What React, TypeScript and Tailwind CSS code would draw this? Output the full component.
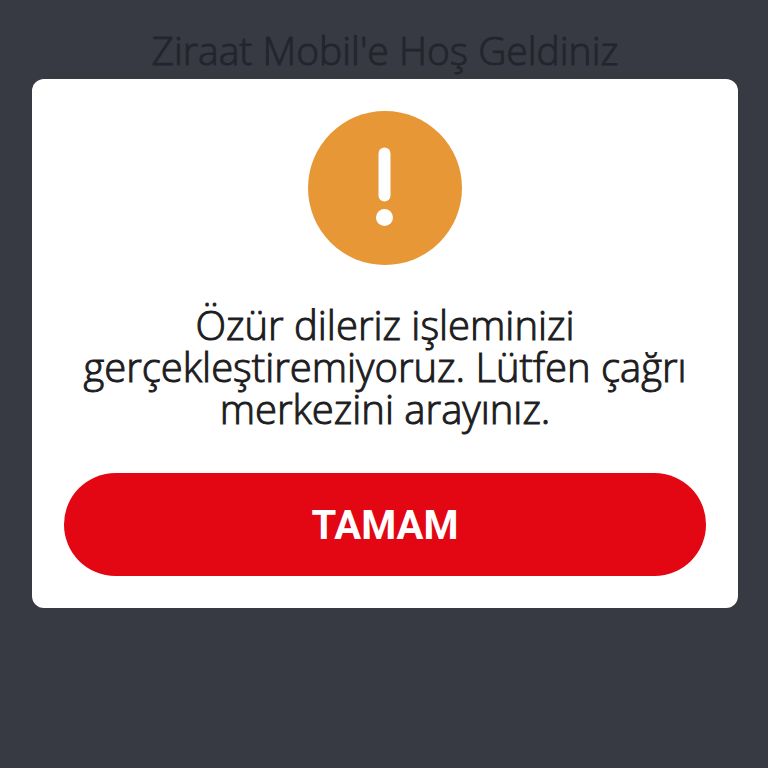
import { useState } from "react";

function WarningIcon() {
  return (
    <svg viewBox="0 0 154 154" className="size-[154px]" aria-hidden="true">
      <circle cx="77" cy="77" r="77" fill="#e79736" />
      <rect x="70.5" y="36.5" width="12" height="54" rx="6" fill="#fff" />
      <circle cx="76.5" cy="106.5" r="8.5" fill="#fff" />
    </svg>
  );
}

function ErrorDialog({ message, onClose }: { message: string; onClose: () => void }) {
  return (
    <div
      role="alertdialog"
      aria-describedby="dialog-message"
      className="flex flex-col items-center rounded-xl bg-white px-8 pt-8 pb-8"
    >
      <WarningIcon />
      <p
        id="dialog-message"
        className="mt-[39px] text-center text-[40px] leading-[42px] font-light text-[#1d1d1f] [-webkit-text-stroke:1px_#1d1d1f]"
      >
        {message}
      </p>
      <button
        type="button"
        onClick={onClose}
        className="mt-[43px] h-[103px] w-full rounded-full bg-[#e30613] pt-[2px] font-['Roboto',sans-serif] text-[40px] font-bold text-white"
      >
        TAMAM
      </button>
    </div>
  );
}

export default function App() {
  const [isOpen, setIsOpen] = useState(true);

  return (
    <main className="min-h-screen bg-[#383a43] pr-[30px] pl-8 font-['Open_Sans',sans-serif]">
      <h1 className="pt-6 pb-[3px] text-center text-[39px] leading-[52px] font-light text-[#23252e] [-webkit-text-stroke:1px_#23252e]">
        Ziraat Mobil'e Hoş Geldiniz
      </h1>
      {isOpen && (
        <ErrorDialog
          message="Özür dileriz işleminizi gerçekleştiremiyoruz. Lütfen çağrı merkezini arayınız."
          onClose={() => setIsOpen(false)}
        />
      )}
    </main>
  );
}
